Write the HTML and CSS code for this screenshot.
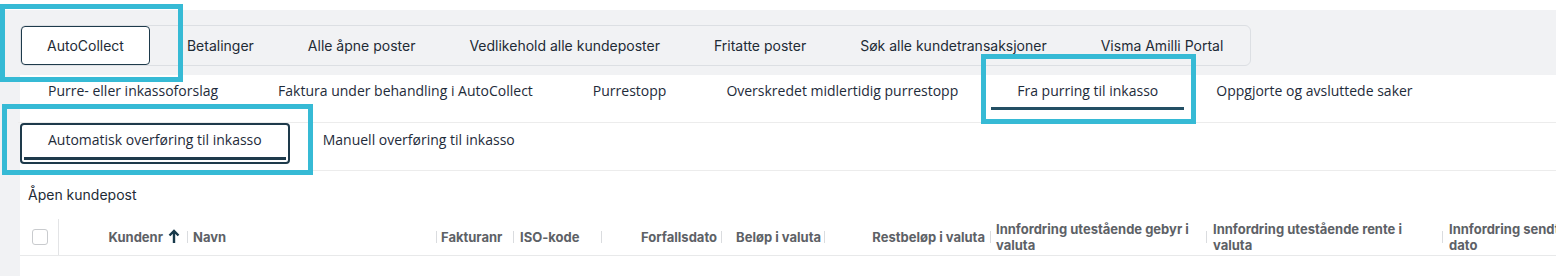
FILE: index.html
```html
<!DOCTYPE html>
<html lang="no">
<head>
  <meta charset="UTF-8" />
  <meta name="viewport" content="width=device-width, initial-scale=1.0"/>
  <title>AutoCollect</title>
  <link rel="stylesheet" href="styles.css">
</head>
<body>

<div class="topband">
  <div class="maintabs">
    <div class="maintab active">AutoCollect</div>
    <div class="maintab">Betalinger</div>
    <div class="maintab">Alle åpne poster</div>
    <div class="maintab">Vedlikehold alle kundeposter</div>
    <div class="maintab">Fritatte poster</div>
    <div class="maintab">Søk alle kundetransaksjoner</div>
    <div class="maintab">Visma Amilli Portal</div>
  </div>
</div>

<div class="layout">
  <div class="rail"></div>
  <div class="content">
    <div class="subtabs">
      <div class="subtab">Purre- eller inkassoforslag</div>
      <div class="subtab">Faktura under behandling i AutoCollect</div>
      <div class="subtab">Purrestopp</div>
      <div class="subtab">Overskredet midlertidig purrestopp</div>
      <div class="subtab active">Fra purring til inkasso</div>
      <div class="subtab">Oppgjorte og avsluttede saker</div>
    </div>

    <div class="pilltabs">
      <div class="pill active">Automatisk overføring til inkasso</div>
      <div class="pill">Manuell overføring til inkasso</div>
    </div>

    <div class="section-title">Åpen kundepost</div>

    <div class="thead">
      <div class="th th-check"><span class="checkbox"></span></div>
      <div class="th th-kundenr">Kundenr
        <svg class="sort" width="12" height="15" viewBox="0 0 12 15"><path d="M6 14V2.5M1.5 6.5L6 2l4.5 4.5" fill="none" stroke="#17394a" stroke-width="2.4"/></svg>
      </div>
      <div class="sep"></div>
      <div class="th th-navn">Navn</div>
      <div class="sep"></div>
      <div class="th th-faktura">Fakturanr</div>
      <div class="sep"></div>
      <div class="th th-iso">ISO-kode</div>
      <div class="sep"></div>
      <div class="th th-forfall">Forfallsdato</div>
      <div class="sep"></div>
      <div class="th th-belop">Beløp i valuta</div>
      <div class="sep"></div>
      <div class="th th-rest">Restbeløp i valuta</div>
      <div class="sep"></div>
      <div class="th th-gebyr">Innfordring utestående gebyr i valuta</div>
      <div class="sep"></div>
      <div class="th th-rente">Innfordring utestående rente i valuta</div>
      <div class="sep"></div>
      <div class="th th-sendt">Innfordring sendt dato</div>
    </div>
  </div>
</div>

<!-- highlight marks -->
<div class="mark mark-main"></div>
<div class="mark mark-sub"></div>
<div class="mark mark-pill"></div>

</body>
</html>
```

FILE: styles.css
```css
body {
  margin: 0;
  padding-top: 10px;
  width: 1556px;
  height: 276px;
  overflow: hidden;
  background: #fff;
  font-family: Inter, "Noto Sans", sans-serif;
  color: #1e2b36;
  position: relative;
}

.topband {
  background: #f1f2f4;
  height: 65px;
  padding: 15px 0 0 20px;
  box-sizing: border-box;
}
.maintabs {
  display: inline-flex;
  border: 1px solid #dcdfe3;
  border-radius: 6px;
  height: 41px;
  box-sizing: border-box;
}
.maintab {
  font-size: 14px;
  line-height: 39px;
  padding: 0 27px;
  white-space: nowrap;
}
.maintab.active {
  background: #fff;
  border: 1px solid #1e3a4b;
  border-radius: 4px;
  line-height: 37px;
  padding: 0 25px;
  margin: 0 10px 0 0;
}

.layout { display: flex; }
.rail { width: 20px; flex: none; background: #f1f2f4; height: 201px; }
.content { flex: 1; min-width: 0; }

.subtabs {
  display: flex;
  height: 47px;
  margin-left: -2px;
  border-bottom: 1px solid #ececec;
  font-family: "Open Sans", sans-serif;
  font-size: 14px;
}
.subtab {
  margin: 0 4px;
  padding: 6px 26px 6px;
  line-height: 20px;
  height: 20px;
  border-bottom: 3px solid transparent;
  white-space: nowrap;
  color: #1e2b3a;
}
.subtab:nth-child(n+5) { margin-left: 3px; margin-right: 3px; }
.subtab.active { border-bottom-color: #234f64; }

.pilltabs {
  display: flex;
  gap: 7px;
  height: 47px;
  border-bottom: 1px solid #ececec;
  font-family: "Open Sans", sans-serif;
  font-size: 14px;
}
.pill {
  padding: 7px 26px 0;
  line-height: 20px;
  white-space: nowrap;
  color: #1e2b3a;
}
.pill.active {
  height: 28px;
  padding: 5px 26px 4px;
  border: 2px solid #1e3a4b;
  border-radius: 4px;
  background: #fff linear-gradient(#1e3a4b, #1e3a4b) no-repeat;
  background-size: calc(100% - 4px) 3px;
  background-position: 2px calc(100% - 2px);
}

.section-title {
  font-size: 14px;
  line-height: 20px;
  padding: 14px 0 0 8px;
  height: 34px;
}

.thead {
  display: flex;
  align-items: center;
  height: 36px;
  border-bottom: 1px solid #e8e9ea;
  font-size: 13px;
  font-weight: 700;
  color: #5d6166;
  line-height: 16px;
  white-space: nowrap;
}
.th { flex: none; display: flex; align-items: center; box-sizing: border-box; }
.sep { flex: none; width: 1px; height: 12px; background: #dadcdf; }

.th-check {
  width: 39px;
  height: 36px;
  border-right: 1px solid #e3e4e6;
  padding-left: 12px;
}
.checkbox {
  width: 16px;
  height: 16px;
  box-sizing: border-box;
  border: 1px solid #c9cbce;
  border-radius: 3px;
  background: #fff;
}
.th-kundenr { width: 128px; justify-content: flex-end; padding-right: 7px; gap: 5px; }
.sort { margin-top: -1px; }
.th-navn { width: 248px; padding-left: 5px; }
.th-faktura { width: 76px; padding-left: 4px; }
.th-iso { width: 87px; padding-left: 6px; }
.th-forfall { width: 119px; justify-content: flex-end; padding-right: 4px; }
.th-belop { width: 102px; justify-content: flex-end; padding-right: 3px; }
.th-rest { width: 165px; justify-content: flex-end; padding-right: 5px; }
.th-gebyr { width: 215px; padding-left: 5px; padding-right: 4px; white-space: normal; }
.th-rente { width: 235px; padding-left: 6px; padding-right: 20px; white-space: normal; }
.th-sendt { width: 126px; padding-left: 6px; white-space: normal; }

.mark {
  position: absolute;
  border: 5px solid #36bad5;
  box-sizing: border-box;
}
.mark-main { left: 0; top: 4px; width: 183px; height: 78px; }
.mark-sub { left: 981px; top: 54px; width: 215px; height: 70px; }
.mark-pill { left: 2px; top: 104px; width: 311px; height: 71px; }
```
